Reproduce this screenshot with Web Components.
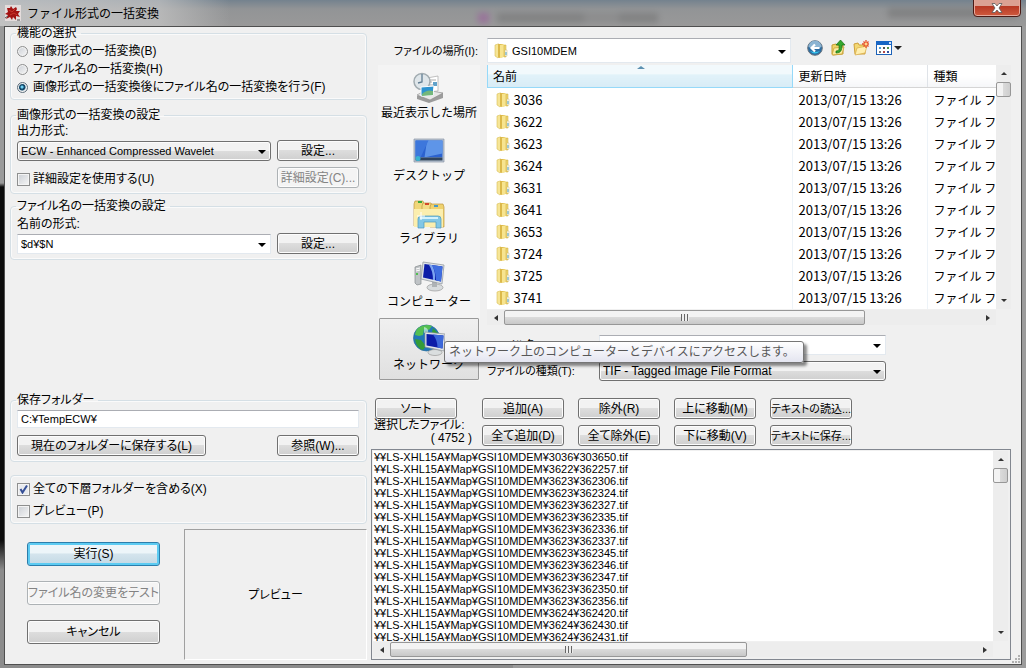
<!DOCTYPE html>
<html lang="ja">
<head>
<meta charset="utf-8">
<title>ファイル形式の一括変換</title>
<style>
  html, body { margin: 0; }
  body {
    font: 12px/12px "Liberation Sans", "Noto Sans CJK JP", sans-serif;
    font-feature-settings: "palt";
    color: #000;
    --view-font: "Noto Sans CJK JP", sans-serif;
  }
</style>
</head>
<body>
<batch-dialog></batch-dialog>

<script>
const define = (name, html, setup) => {
  const template = document.createElement('template');
  template.innerHTML = html;
  customElements.define(name, class extends HTMLElement {
    connectedCallback() {
      if (this.shadowRoot) return;
      this.attachShadow({ mode: 'open' }).append(template.content.cloneNode(true));
      if (setup) setup(this, this.shadowRoot);
    }
  });
};

const reset = `
  *, *::before { box-sizing: border-box; }
  button, input, select { font: inherit; font-feature-settings: inherit; color: inherit; margin: 0; }
`;

/* ---------- icons ---------- */
const icons = {
  app: [16, `<rect width="16" height="16" fill="#e4dcdc"/><path d="M2 3l3 0 1-2 2 3 3-2 1 2-1 2 4 0-2 3 2 3-4-1 0 4-3-3-1 3-2-3-4 2 2-4-3-1 3-2z" fill="#a31212"/><path d="M4 5l3 2 3-3M5 10l4-2 3 2" stroke="#c8382c" fill="none"/><path d="M0 13l3-2M12 15l3 0" stroke="#555"/>`],
  folder: [16, `<path d="M2 2l3-1 1 0 0 13-1 1-3-2z" fill="#f6e596" stroke="#d9bd55" stroke-width=".6"/><path d="M5 1h5v13l-4 1-1-1z" fill="#dcb94a"/><path d="M7 2l4-1v13l-4 1z" fill="#f7e48f"/><path d="M11 2h2v12h-2z" fill="#efd670" stroke="#c9a83e" stroke-width=".5"/><path d="M12 7h2v6h-2z" fill="#fff" stroke="#c9b878" stroke-width=".5"/><path d="M13 9v3" stroke="#4b9fc5"/>`],
  back: [16, `<circle cx="8" cy="8" r="7.300" fill="#2b6da3" stroke="#68727c"/><path d="M1.500 7a6.500 6.500 0 0 1 13 0q-6 3-13 0z" fill="#8cb4d2"/><path d="M3 11q5 5 10 0-5 2-10 0z" fill="#35c6ee"/><path d="M12.500 8H5M8 4.500L4.500 8 8 11.500" fill="none" stroke="#fff" stroke-width="2.200"/>`],
  up: [16, `<path d="M2 5l4-1 1 1h6v9l-10 1-1-1z" fill="#f0d468" stroke="#c59c32"/><path d="M4 8l10-1-2 7-10 1z" fill="#fbeb9f" stroke="#c59c32" stroke-width=".7"/><path d="M6 11c4 0 3-3 3-6H6l4.500-5L15 5h-3c0 5-1 8-6 8z" fill="#35a82c" stroke="#176f18" stroke-width=".7"/>`],
  fresh: [16, `<path d="M1 4l4-1 1 2h6v9H2z" fill="#f3d873" stroke="#cfa03b"/><path d="M4 8l10-2-2 7-10 2z" fill="#ffefb0" stroke="#d8ac48" stroke-width=".7"/><path d="M13 0v8M9 4h7M10.500 1.500l5 5M15.500 1.500l-5 5" stroke="#e6502a" stroke-width="1.300"/><circle cx="13" cy="4" r="1.500" fill="#ffd48a"/>`],
  views: [16, `<rect x=".5" y="1.500" width="15" height="13" fill="#fff" stroke="#1c62b8"/><path d="M0 1h16v4H0z" fill="#1866c4"/><path d="M13 2h2v2h-2z" fill="#cfe3fa"/><path d="M3 7h2v2H3z" fill="#4a9ad6"/><path d="M7 7h2v2H7z" fill="#555"/><path d="M11 7h2v2h-2z" fill="#4d9148"/><path d="M3 11h2v2H3z" fill="#777"/><path d="M7 11h2v2H7z" fill="#b34848"/><path d="M11 11h2v2h-2z" fill="#344f9c"/>`],
  recent: [32, `<path d="M4 24l8-5 18 2v5L16 31 4 27z" fill="#9c9c9c"/><path d="M4 23l9-5 17 3-13 7z" fill="#e8e8e8" stroke="#888" stroke-width=".6"/><path d="M14 6l11-2v15l-11 1z" fill="#fff" stroke="#a8a8a8" stroke-width=".7"/><path d="M16 8h7M16 10h3M16 13h7" stroke="#aaa"/><path d="M20 10h4v4h-4z" fill="#60a2ca"/><circle cx="9" cy="9.500" r="8" fill="#dfe6ea" stroke="#a1abb0" stroke-width="1.500"/><path d="M9 2v8l-4 1" stroke="#607d92" stroke-width="1.300" fill="none"/><path d="M8 15l13-1-1 9-12 1z" fill="#2d93d0" stroke="#fff"/><path d="M9 22q5-5 11-3v4l-11 1z" fill="#74b77b"/>`],
  desktop: [32, `<path d="M1 4h30v23H1z" fill="#bcc7d4" stroke="#8793a4" stroke-width=".7"/><path d="M2.500 5.500h27v17h-27z" fill="#2b62cf"/><path d="M14 5.500h15.500v13q-10 2-18 4z" fill="#5e95e8"/><path d="M2.500 5.500h13l-8 17h-5z" fill="#3d77dc"/><path d="M2.500 22.500h27v3h-27z" fill="#30445d"/><circle cx="5" cy="23.500" r="2.500" fill="#39b2d0"/>`],
  library: [32, `<path d="M1 6l1-3h8l1 3v22H1z" fill="#f0d67a" stroke="#bd963c" stroke-width=".7"/><path d="M9 8l1-3h8l1 3v20H9z" fill="#f3dc86" stroke="#bd963c" stroke-width=".7"/><path d="M17 9l1-3h12l1 3v20H17z" fill="#efd26f" stroke="#bd963c" stroke-width=".7"/><path d="M1 11h29v18H1z" fill="#fbeeae"/><path d="M5 3h4v2H5z" fill="#38a93d"/><path d="M12 5h4v2h-4z" fill="#d3492b"/><path d="M21 7h4v2h-4z" fill="#4699ca"/><path d="M5 30v-9q0-3 3-3h17q3 0 3 3v9h-5v-6H11v6z" fill="#83c7e5" stroke="#4a98bd" stroke-width=".7"/><path d="M7 20h18" stroke="#d4f2fc" stroke-width="2"/><path d="M8 14v8M4 18h8" stroke="#fff"/>`],
  computer: [32, `<path d="M2 6l6-2v19l-4 1-2-2z" fill="#bfc3c6" stroke="#84898c" stroke-width=".7"/><path d="M3 8l4-1M3 10l4-1" stroke="#fff"/><path d="M3 12h2v2H3z" fill="#50c050"/><ellipse cx="22" cy="26.500" rx="8" ry="3.500" fill="#d8dcde" stroke="#999" stroke-width=".7"/><path d="M19 20h5v6h-5z" fill="#aeb3b6"/><path d="M10 1l21 3-2 19-21-5z" fill="#dfe4e8" stroke="#8a9096" stroke-width=".7"/><path d="M11.500 3l18 2.500-1.500 15-18-4z" fill="#0c1da8"/><path d="M19 4l10.500 1.500-1.500 15-5-1q0-8-4-15.500z" fill="#3f6ee0"/><path d="M16 4l3 0q4 8 3 15l-2 0q0-9-4-15z" fill="#7ba4f0"/>`],
  network: [32, `<circle cx="13.500" cy="14" r="13" fill="#2177b8" stroke="#2b6d96" stroke-width=".7"/><path d="M5 4q7-5 14-2l-3 4-5-1-1 6-4 1-4-1q0-4 3-7z" fill="#53bf52"/><path d="M2 15l6 1 5 6-3 4q-7-2-8-11zM20 4l5 5 0 6-7-3z" fill="#349c38"/><path d="M11 3q5 1 4 6l-4 0z" fill="#cdf5dd" opacity=".7"/><ellipse cx="22" cy="28.500" rx="7" ry="3" fill="#dadedf" stroke="#999" stroke-width=".7"/><path d="M12 8l20 2-1 17-19-4z" fill="#e2e7ea" stroke="#8a9096" stroke-width=".7"/><path d="M13.500 10l17 1.500-1 13-16-3z" fill="#0c1da8"/><path d="M20 10.500l10.500 1-1 13-5-1q0-7-4.500-13z" fill="#3c68da"/>`]
};
define('ui-icon', `<style>:host{display:block;flex:none}svg{display:block}</style>`, (el, root) => {
  const [size, body] = icons[el.getAttribute('name')];
  root.innerHTML += `<svg width="${size}" height="${size}" viewBox="0 0 ${size} ${size}" aria-hidden="true">${body}</svg>`;
});

/* ---------- form controls ---------- */
define('ui-button', `<style>${reset}
  :host { display: block; flex: none; width: var(--w, 82px); height: var(--h, 21px); }
  button { width: 100%; height: 100%; padding: 0; border: 1px solid #707070; border-radius: 3px; white-space: nowrap;
    box-shadow: inset 0 0 0 1px #fcfcfc; background: linear-gradient(#f2f2f2 0 48%, #dddddd 50%, #cfcfcf); display: flex; align-items: center; justify-content: center; }
  button:disabled { color: #838383; border-color: #adb2b5; background: #f4f4f4; }
  :host([primary]) button { border-color: #2c7dab; box-shadow: inset 0 0 0 2px #5ccbf2; background: linear-gradient(#edf5f9 0 45%, #d4e4ed 50%, #c3d9e5); }
  :host([compact]) button { font-size: 11px; }
</style><button type="button"><slot></slot></button>`, (el, root) => {
  root.querySelector('button').disabled = el.hasAttribute('disabled');
});

define('ui-choice', `<style>${reset}
  :host { display: block; }
  label { display: flex; align-items: center; gap: 3px; height: var(--h, 18px); white-space: nowrap; }
  input { appearance: none; flex: none; width: 13px; height: 13px; border: 1px solid #8e8f8f; background: linear-gradient(135deg, #cbcfd5, #f6f6f6); box-shadow: inset 0 0 0 1px #f4f4f4; }
  input[type=radio] { width: 11px; height: 11px; border-radius: 50%; margin: 0 2px 0 0; }
  input[type=radio]:checked { border-color: #5f6f7c; background: radial-gradient(circle at 45% 45%, #6fd2f5 0 1px, #14496b 2px 3px, #dfe7ec 4px); }
  input[type=checkbox]:checked { background: url("data:image/svg+xml,%3Csvg xmlns='http://www.w3.org/2000/svg' width='11' height='11'%3E%3Cpath d='M2.500 5l2 3.500L9 1.500' fill='none' stroke='%23354f96' stroke-width='2'/%3E%3C/svg%3E") #e8eaee; }
</style><label><input><span><slot></slot></span></label>`, (el, root) => {
  const input = root.querySelector('input');
  input.type = el.getAttribute('type');
  input.checked = el.hasAttribute('checked');
});

define('ui-field', `<style>${reset}
  :host { display: block; min-width: 0; }
  .wrap { display: flex; flex-direction: column; }
  :host([inline]) .wrap { flex-direction: row; align-items: center; }
  label { display: block; line-height: 12px; margin-bottom: 4px; white-space: nowrap; }
  label:empty { display: none; }
  :host([inline]) label { flex: none; width: var(--label, 112px); margin: 0; padding-right: var(--label-gap, 0); text-align: var(--label-align, left); font-size: 11px; }
  .box { display: flex; align-items: center; position: relative; height: var(--h, 20px); flex: none; width: var(--w, auto); background: #fff; border: 1px solid #e3e9ef; border-top-color: #abadb3; font-size: var(--size, 12px); line-height: 16px; }
  .box.drop { background: linear-gradient(#f2f2f2 0 48%, #dddddd 50%, #cfcfcf); border: 1px solid #707070; border-radius: 3px; box-shadow: inset 0 0 0 1px #fcfcfc; }
  input, select { appearance: none; flex: 1; min-width: 0; width: 100%; height: 100%; border: 0; outline: 0; background: none; padding: 0 20px 0 3px; border-radius: 0; }
  ui-icon { margin: 0 -1px 0 5px; }
  ui-icon + select { padding-left: 4px; font-size: 11px; }
  .arrow { position: absolute; right: 4px; top: calc(50% - 1px); border: 4px solid transparent; border-top-color: #000; border-bottom: 0; pointer-events: none; }
</style><div class="wrap"><label for="c"></label><div class="box"></div></div>`, (el, root) => {
  const a = n => el.getAttribute(n) || '';
  root.querySelector('label').textContent = a('label');
  const box = root.querySelector('.box');
  const kind = a('kind');
  if (a('icon')) box.innerHTML = `<ui-icon name="${a('icon')}"></ui-icon>`;
  const control = document.createElement(kind === 'select' ? 'select' : 'input');
  control.id = 'c';
  if (kind === 'select') control.add(new Option(a('value')));
  else { control.type = 'text'; control.value = a('value'); }
  if (!a('label')) control.setAttribute('aria-label', a('name'));
  box.append(control);
  if (kind === 'select' && !a('icon')) box.classList.add('drop');
  if (kind !== 'text') box.insertAdjacentHTML('beforeend', '<span class="arrow"></span>');
});

define('ui-group', `<style>${reset}
  :host { display: block; }
  fieldset { margin: 0; min-width: 0; border: 1px solid #d5dfe5; border-radius: 4px; padding: 0 7px 0 6px; box-shadow: inset 0 0 0 1px #fafafa; }
  legend { padding: 0 4px 0 1px; margin-left: -1px; line-height: 12px; height: 12px; }
  :host(:not([legend])) legend { display: none; }
</style><fieldset><legend></legend><slot></slot></fieldset>`, (el, root) => {
  root.querySelector('legend').textContent = el.getAttribute('legend') || '';
});

/* ---------- scroll bar ---------- */
define('ui-scroll', `<style>${reset}
  :host { display: flex; background: #ededed; width: 15px; flex-direction: column; }
  :host([across]) { flex-direction: row; width: auto; height: 15px; }
  button { flex: none; width: 15px; height: 17px; padding: 0; border: 0; background: none; display: flex; align-items: center; justify-content: center; }
  :host([across]) button { width: 17px; height: 15px; }
  button::before { content: ""; border: 3px solid transparent; }
  .less::before { border-bottom-color: #333; border-top: 0; }
  .more::before { border-top-color: #333; border-bottom: 0; }
  :host([across]) button::before { border: 3px solid transparent; }
  :host([across]) .less::before { border-right: 4px solid #333; border-left: 0; }
  :host([across]) .more::before { border-left: 4px solid #333; border-right: 0; }
  .track { flex: 1; min-width: 0; min-height: 0; }
  .thumb { height: var(--thumb); width: 15px; border: 1px solid #979797; border-radius: 2px; background: linear-gradient(90deg, #f3f3f3 0 45%, #dadada 50%, #cecece); display: flex; align-items: center; justify-content: center; }
  :host([across]) .thumb { width: var(--thumb); height: 15px; background: linear-gradient(#f3f3f3 0 45%, #dadada 50%, #c8c8c8); }
  :host([across]) .thumb::before { content: ""; width: 8px; height: 7px; background: repeating-linear-gradient(90deg, #666 0 1px, #eee 1px 3px); }
</style><button type="button" class="less" aria-label="前へ"></button><div class="track"><div class="thumb"></div></div><button type="button" class="more" aria-label="次へ"></button>`);

/* ---------- places bar ---------- */
define('place-item', `<style>${reset}
  :host { display: block; }
  button { width: 100%; height: 62px; padding: 5px 0 0; border: 1px solid transparent; background: none; display: flex; flex-direction: column; align-items: center; font: 12px/16px var(--view-font); font-feature-settings: normal; white-space: nowrap; }
  :host([selected]) button { border-color: #999; border-radius: 1px; background: linear-gradient(#f0f0f0, #e0e0e0); }
</style><button type="button"><span><slot></slot></span></button>`, (el, root) => {
  const icon = document.createElement('ui-icon');
  icon.setAttribute('name', el.getAttribute('icon'));
  root.querySelector('button').prepend(icon);
});

/* ---------- folder view ---------- */
define('folder-view', `<style>${reset}
  :host { display: grid; grid-template: 244px 1px 15px / minmax(0, 1fr) 15px; font-family: var(--view-font); font-feature-settings: normal; }
  .view { overflow: hidden; background: #fff; }
  table { width: 100%; border-collapse: collapse; table-layout: fixed; }
  th, td { padding: 0 0 0 6px; height: 22px; text-align: left; font-weight: normal; white-space: nowrap; overflow: hidden; line-height: 20px; border-right: 1px solid #edf3f8; }
  th { font-size: 12px; border-bottom: 1px solid #d5d5d5; background: linear-gradient(#fff 50%, #f5f6f8); border-right-color: #dfe3e8; }
  th:first-child { padding-left: 5px; background: linear-gradient(#f2f9fc 40%, #e1f2f9 45%, #d8ecf6); border: 1px solid #96d9f9; border-top: 0; }
  .sorted { display: flex; position: relative; }
  .sorted::after { content: ""; position: absolute; left: 50%; top: 0; border: 4px solid transparent; border-top: 0; border-bottom: 3px solid #5c90b0; margin-left: -5px; }
  td { font-size: 13px; }
  td:first-child { padding-left: 7px; }
  td:last-child { font-size: 12px; }
  td span { display: flex; align-items: center; gap: 3px; }
  th:last-child, td:last-child { border-right: 0; }
  tbody::before { content: ""; display: block; height: 1px; }
  .bottom { grid-row: 3; }
  .side { --thumb: 15px; } .bottom { --thumb: 76%; }
</style>
<div class="view"><table><colgroup><col><col style="width:135px"><col style="width:69px"></colgroup>
<thead><tr><th><span class="sorted">名前</span></th><th>更新日時</th><th>種類</th></tr></thead><tbody></tbody></table></div>
<ui-scroll class="side"></ui-scroll><ui-scroll class="bottom" across></ui-scroll>`, (el, root) => {
  root.querySelector('tbody').innerHTML = el.getAttribute('folders').split(' ').map(n =>
    `<tr><td><span><ui-icon name="folder"></ui-icon>${n}</span></td><td>2013/07/15 13:26</td><td>ファイル フ</td></tr>`).join('');
});

/* ---------- selected files ---------- */
define('file-list', `<style>${reset}
  :host { display: grid; grid-template: minmax(0, 1fr) 1px 15px / minmax(0, 1fr) 15px; padding: 1px 2px 2px 1px; border: 1px solid #828790; background: #f0f0f0; min-height: 0; }
  ul { margin: 0; padding: 0 0 0 1px; list-style: none; background: #fff; overflow: hidden; height: 190px; font-size: 11px; }
  li { line-height: 12px; white-space: nowrap; }
  .side { --thumb: 15px; height: 190px; } .bottom { grid-row: 3; --thumb: 61%; }
</style><ul role="listbox" aria-label="選択したファイル"></ul><ui-scroll class="side"></ui-scroll><ui-scroll class="bottom" across></ui-scroll>`, (el, root) => {
  root.querySelector('ul').innerHTML = el.getAttribute('files').split(' ').map(n =>
    `<li role="option">¥¥LS-XHL15A¥Map¥GSI10MDEM¥${n.slice(0, 4)}¥${n}.tif</li>`).join('');
});

/* ---------- window frame ---------- */
define('glass-window', `<style>${reset}
  :host { display: grid; grid-template-rows: 26px 1fr; min-height: 100vh; padding: 0 4px 3px; box-sizing: border-box;
    background: linear-gradient(90deg, transparent 50%, #9c9c9c 50%), linear-gradient(#9a9a9a 0 183px, #0c0c0c 187px 540px, #8c8c8c 570px); }
  header { position: relative; margin: 0 -4px; padding-left: 5px; display: flex; align-items: center; gap: 6px; overflow: hidden;
    background: linear-gradient(90deg, #d0d0d0bb 0, #c8c8c8aa 160px, transparent 230px), linear-gradient(#74828e, #929496 9px, #999 26px); }
  h1 { font: 12px/16px var(--view-font); font-feature-settings: normal; margin: 0; }
  h1, ui-icon { position: relative; }
  .behind { position: absolute; left: 478px; top: 13px; width: 180px; height: 10px; filter: blur(3px); opacity: .3;
    background: linear-gradient(90deg, #a020a0 0 10px, transparent 12px 18px, #555 20px 106px, #777 106px 140px, #555 142px); }
  .behind.two { left: 888px; top: 8px; width: 130px; background: #555; }
  .close { position: absolute; right: 5px; top: -4px; width: 48px; height: 21px; border: 1px solid #4a1b16; border-radius: 0 0 4px 4px; padding: 3px 0 0; box-shadow: inset 0 0 0 1px #e6a99c;
    background: linear-gradient(#dba193 0 45%, #b83a25 50%, #cf5a3e); display: flex; justify-content: center; align-items: center; }
  main { border: 1px solid #4f4f4f; background: #f0f0f0; display: grid; position: relative; }
  .grip { position: absolute; right: 1px; bottom: 1px; }
</style>
<header><div class="behind"></div><div class="behind two"></div><ui-icon name="app"></ui-icon><h1></h1>
<button class="close" type="button" aria-label="閉じる"><svg width="12" height="10" viewBox="0 0 12 10"><path d="M1 .5h3L6 3 8 .5h3L8 5l3 4.500H8L6 7 4 9.500H1L4 5z" fill="#fff" stroke="#5b5b5b" stroke-width=".8"/></svg></button></header>
<main><slot></slot><svg class="grip" width="9" height="9" fill="#b0b0b0" aria-hidden="true"><path d="M7 1h2v2H7zM4 4h2v2H4zM7 4h2v2H7zM1 7h2v2H1zM4 7h2v2H4zM7 7h2v2H7z"/></svg></main>`, (el, root) => {
  root.querySelector('h1').textContent = el.getAttribute('heading');
});

/* ---------- dialog ---------- */
define('settings-pane', `<style>${reset}
  :host { display: flex; flex-direction: column; padding: 0 1px 4px 5px; }
  .row { display: flex; justify-content: space-between; align-items: flex-end; }
  .g1 { padding: 3px 0; } .g2 { padding: 4px 0 5px; } .g3 { padding: 6px 0 5px; } .g4 { padding: 4px 0 5px; } .g5 { padding: 2px 0 1px; --h: 22px; }
  .g2, .g3, .g4 { display: flex; flex-direction: column; gap: 6px; }
  .g4 { gap: 7px; }
  .combo { --w: 254px; --size: 11px; }
  .folder { --h: 18px; --size: 11px; }
  .bottom { display: flex; justify-content: space-between; margin-top: 5px; height: 131px; }
  .actions { display: flex; flex-direction: column; gap: 15px; padding: 13px 0 0 17px; --w: 133px; --h: 24px; }
  .preview { width: 183px; display: grid; place-items: center; border: 1px solid; border-color: #a0a0a0 #fff #fff #a0a0a0; }
  .g2group { margin-top: 9px; } .g3group { margin-top: 6px; } .spacer { flex: 1; min-height: 12px; } .g5group { margin-top: 13px; }
</style>
<ui-group legend="機能の選択"><div class="g1">
  <ui-choice type="radio">画像形式の一括変換(B)</ui-choice>
  <ui-choice type="radio">ファイル名の一括変換(H)</ui-choice>
  <ui-choice type="radio" checked>画像形式の一括変換後にファイル名の一括変換を行う(F)</ui-choice></div></ui-group>
<ui-group class="g2group" legend="画像形式の一括変換の設定"><div class="g2">
  <div class="row"><ui-field class="combo" kind="select" label="出力形式:" value="ECW - Enhanced Compressed Wavelet"></ui-field><ui-button>設定...</ui-button></div>
  <div class="row"><ui-choice type="checkbox">詳細設定を使用する(U)</ui-choice><ui-button disabled>詳細設定(C)...</ui-button></div></div></ui-group>
<ui-group class="g3group" legend="ファイル名の一括変換の設定"><div class="g3">
  <div class="row"><ui-field class="combo" kind="combo" label="名前の形式:" value="$d¥$N"></ui-field><ui-button>設定...</ui-button></div></div></ui-group>
<div class="spacer"></div>
<ui-group legend="保存フォルダー"><div class="g4">
  <ui-field class="folder" kind="text" name="保存フォルダー" value="C:¥TempECW¥"></ui-field>
  <div class="row"><ui-button style="--w:189px">現在のフォルダーに保存する(L)</ui-button><ui-button>参照(W)...</ui-button></div></div></ui-group>
<ui-group class="g5group"><div class="g5">
  <ui-choice type="checkbox" checked>全ての下層フォルダーを含める(X)</ui-choice>
  <ui-choice type="checkbox">プレビュー(P)</ui-choice></div></ui-group>
<div class="bottom"><div class="actions">
  <ui-button primary>実行(S)</ui-button><ui-button disabled>ファイル名の変更をテスト</ui-button><ui-button>キャンセル</ui-button></div>
  <div class="preview">プレビュー</div></div>`);

define('files-pane', `<style>${reset}
  :host { display: flex; flex-direction: column; padding: 11px 10px 4px 3px; min-width: 0; }
  .top { display: flex; align-items: center; gap: 16px; }
  .look { --label: 119px; --label-gap: 9px; --label-align: right; --w: 304px; --h: 25px; margin-left: -3px; }
  .tools { display: flex; align-items: center; margin: 0 0 5px; }
  .tools button { border: 0; background: none; padding: 0; height: 16px; margin-right: 7px; display: flex; align-items: center; gap: 2px; }
  .tools .tri { border: 4px solid transparent; border-top-color: #222; border-bottom: 0; }
  .browse { display: grid; grid-template-columns: 102px minmax(0, 1fr); gap: 7px; margin: 2px 0 17px 7px; }
  nav { background: #f4f4f4; padding: 1px; display: flex; flex-direction: column; gap: 1px; position: relative; }
  .tip { position: absolute; z-index: 2; left: 66px; top: 276px; height: 22px; padding: 0 8px 0 4px; border: 1px solid #767676; border-radius: 3px; background: linear-gradient(#fff, #e4e5f0); color: #575757; box-shadow: 3px 3px 3px #0007; font: 12px/18px var(--view-font); font-feature-settings: normal; white-space: nowrap; }
  .names { --w: 287px; display: flex; flex-direction: column; gap: 6px; margin-top: 10px; }
  .ops { display: grid; grid-template-columns: 93px repeat(4, 82px); gap: 6px 14px; margin: 0 0 3px 4px; }
  .sort { grid-row: span 2; height: 48px; }
  .sort p { margin: 0 7px 0 -1px; line-height: 13px; white-space: nowrap; }
  .sort p + p { text-align: right; margin-right: -4px; }
  file-list { flex: 1; }
</style>
<div class="top"><ui-field class="look" inline kind="select" icon="folder" label="ファイルの場所(I):" value="GSI10MDEM"></ui-field>
  <div class="tools"><button type="button" aria-label="戻る"><ui-icon name="back"></ui-icon></button><button type="button" aria-label="上へ"><ui-icon name="up"></ui-icon></button><button type="button" aria-label="新しいフォルダー"><ui-icon name="fresh"></ui-icon></button><button type="button" aria-label="表示"><ui-icon name="views"></ui-icon><span class="tri"></span></button></div></div>
<div class="browse"><nav>
  <place-item icon="recent">最近表示した場所</place-item><place-item icon="desktop">デスクトップ</place-item><place-item icon="library">ライブラリ</place-item><place-item icon="computer">コンピューター</place-item><place-item icon="network" selected>ネットワーク</place-item>
  <div class="tip" role="tooltip">ネットワーク上のコンピューターとデバイスにアクセスします。</div></nav>
  <div><folder-view folders="3036 3622 3623 3624 3631 3641 3653 3724 3725 3741"></folder-view>
    <div class="names"><ui-field inline kind="combo" label="ファイル名(N):"></ui-field><ui-field inline kind="select" label="ファイルの種類(T):" value="TIF - Tagged Image File Format"></ui-field></div></div></div>
<div class="ops"><div class="sort"><ui-button>ソート</ui-button><p>選択したファイル:</p><p>( 4752 )</p></div>
  <ui-button>追加(A)</ui-button><ui-button>除外(R)</ui-button><ui-button>上に移動(M)</ui-button><ui-button compact>テキストの読込...</ui-button>
  <ui-button>全て追加(D)</ui-button><ui-button>全て除外(E)</ui-button><ui-button>下に移動(V)</ui-button><ui-button compact>テキストに保存...</ui-button></div>
<file-list files="303650 362257 362306 362324 362327 362335 362336 362337 362345 362346 362347 362350 362356 362420 362430 362431"></file-list>`);

define('batch-dialog', `<style>
  :host { display: block; }
  .cols { display: grid; grid-template-columns: 363px minmax(0, 1fr); }
</style><glass-window heading="ファイル形式の一括変換"><div class="cols"><settings-pane></settings-pane><files-pane></files-pane></div></glass-window>`);
</script>
</body>
</html>
